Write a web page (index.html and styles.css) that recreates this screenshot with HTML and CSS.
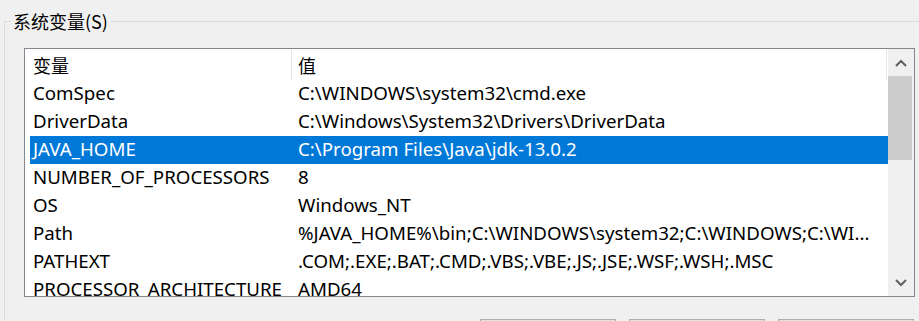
FILE: index.html
```html
<!DOCTYPE html>
<html lang="zh-CN">
<head>
    <meta charset="UTF-8">
    <title>系统变量</title>
    <link rel="stylesheet" href="styles.css">
</head>
<body>
    <fieldset class="group">
        <legend>系统变量(S)</legend>
        <div class="listbox">
            <div class="rows">
                <div class="row head">
                    <div class="cell name">变量</div>
                    <div class="cell value">值</div>
                </div>
                <div class="row">
                    <div class="cell name">ComSpec</div>
                    <div class="cell value">C:\WINDOWS\system32\cmd.exe</div>
                </div>
                <div class="row">
                    <div class="cell name">DriverData</div>
                    <div class="cell value">C:\Windows\System32\Drivers\DriverData</div>
                </div>
                <div class="row selected">
                    <div class="cell name">JAVA_HOME</div>
                    <div class="cell value">C:\Program Files\Java\jdk-13.0.2</div>
                </div>
                <div class="row">
                    <div class="cell name">NUMBER_OF_PROCESSORS</div>
                    <div class="cell value">8</div>
                </div>
                <div class="row">
                    <div class="cell name">OS</div>
                    <div class="cell value">Windows_NT</div>
                </div>
                <div class="row">
                    <div class="cell name">Path</div>
                    <div class="cell value">%JAVA_HOME%\bin;C:\WINDOWS\system32;C:\WINDOWS;C:\WI...</div>
                </div>
                <div class="row">
                    <div class="cell name">PATHEXT</div>
                    <div class="cell value">.COM;.EXE;.BAT;.CMD;.VBS;.VBE;.JS;.JSE;.WSF;.WSH;.MSC</div>
                </div>
                <div class="row">
                    <div class="cell name">PROCESSOR_ARCHITECTURE</div>
                    <div class="cell value">AMD64</div>
                </div>
            </div>
            <div class="scrollbar">
                <div class="arrow">
                    <svg width="12" height="8" viewBox="0 0 12 8"><polyline points="1,7 6,2 11,7" /></svg>
                </div>
                <div class="thumb"></div>
                <div class="track"></div>
                <div class="arrow">
                    <svg width="12" height="8" viewBox="0 0 12 8"><polyline points="1,1 6,6 11,1" /></svg>
                </div>
            </div>
        </div>
        <div class="buttons">
            <button>新建(W)...</button>
            <button>编辑(I)...</button>
            <button>删除(L)</button>
        </div>
    </fieldset>
</body>
</html>
```

FILE: styles.css
```css
body {
    margin: 0;
    height: 321px;
    overflow: hidden;
    background-color: #f0f0f0;
    font-family: "Noto Sans", "Noto Sans CJK SC", sans-serif;
    font-size: 18.7px;
    color: #000;
}
.group {
    margin: 9px -16px 0 4px;
    padding: 0 0 20px 0;
    border: 1px solid #dcdcdc;
}
.group legend {
    margin-left: 6px;
    padding: 0 2px;
    line-height: 24px;
    font-family: "Noto Sans CJK SC", sans-serif;
    font-size: 18px;
}
.listbox {
    display: flex;
    box-sizing: border-box;
    width: 891px;
    height: 249px;
    margin: 15px 0 0 19px;
    border: 1px solid #828790;
    background-color: #ffffff;
}
.rows {
    flex: 1;
    padding-left: 5px;
    overflow: hidden;
}
.row {
    display: grid;
    grid-template-columns: 262px 595px;
    height: 28px;
    align-items: center;
    white-space: nowrap;
}
.row .cell {
    padding-bottom: 3px;
}
.row.head {
    height: 30px;
    padding-top: 1px;
    align-items: stretch;
}
.row.head .cell {
    display: flex;
    align-items: center;
    padding-bottom: 0;
    border-right: 1px solid #e5e5e5;
    font-family: "Noto Sans CJK SC", sans-serif;
    font-size: 18px;
}
.cell {
    overflow: hidden;
}
.cell.name {
    padding-left: 3px;
}
.cell.value {
    padding-left: 6px;
}
.row.selected {
    background-color: #0078d7;
    color: #ffffff;
}
.scrollbar {
    display: flex;
    flex-direction: column;
    width: 26px;
    background-color: #f0f0f0;
}
.arrow {
    display: flex;
    align-items: center;
    justify-content: center;
    height: 27px;
}
.arrow polyline {
    fill: none;
    stroke: #606060;
    stroke-width: 2;
}
.thumb {
    height: 84px;
    margin-right: 2px;
    background-color: #cdcdcd;
}
.track {
    flex: 1;
}
.buttons {
    display: flex;
    justify-content: flex-end;
    gap: 13px;
    width: 890px;
    margin: 22px 0 0 19px;
}
.buttons button {
    width: 136px;
    height: 34px;
    border: 1px solid #adadad;
    background-color: #e1e1e1;
    font-family: "Noto Sans CJK SC", sans-serif;
    font-size: 18px;
}
```
